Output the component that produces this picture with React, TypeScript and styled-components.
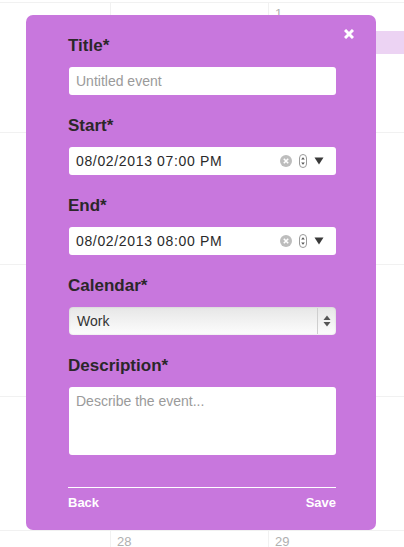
import React from "react";
import styled, { createGlobalStyle } from "styled-components";

const GlobalStyle = createGlobalStyle`
  html, body {
    margin: 0;
    padding: 0;
    background: #fff;
    font-family: "Liberation Sans", Arial, Helvetica, sans-serif;
  }
`;

const rows = [130, 132, 132, 134, 40];

const App: React.FC = () => {
  return (
    <>
      <GlobalStyle />
      <Page>
        <CalendarGrid>
          {rows.map((_, r) =>
            [0, 1, 2].map((c) => (
              <Cell key={`${r}-${c}`} $first={c === 0}>
                {r === 0 && c === 2 && (
                  <>
                    <DayNum>1</DayNum>
                    <EventBar />
                  </>
                )}
                {r === 4 && c === 1 && <DayNum>28</DayNum>}
                {r === 4 && c === 2 && <DayNum>29</DayNum>}
              </Cell>
            ))
          )}
        </CalendarGrid>

        <Popover>
          <CloseButton aria-label="Close">
            <svg width="10" height="10" viewBox="0 0 10 10">
              <path d="M1 1 L9 9 M9 1 L1 9" stroke="#fff" strokeWidth="3" />
            </svg>
          </CloseButton>

          <Field>
            <Label>Title*</Label>
            <TextInput placeholder="Untitled event" />
          </Field>

          <Field>
            <Label>Start*</Label>
            <DateTimeBox value="08/02/2013 07:00 PM" />
          </Field>

          <Field>
            <Label>End*</Label>
            <DateTimeBox value="08/02/2013 08:00 PM" />
          </Field>

          <Field>
            <Label>Calendar*</Label>
            <SelectBox>
              <SelectValue>Work</SelectValue>
              <SelectArrows>
                <svg width="8" height="12" viewBox="0 0 8 12">
                  <path d="M4 0.5 L7.5 5 L0.5 5 Z" fill="#555" />
                  <path d="M4 11.5 L7.5 7 L0.5 7 Z" fill="#555" />
                </svg>
              </SelectArrows>
            </SelectBox>
          </Field>

          <Field>
            <Label>Description*</Label>
            <TextArea placeholder="Describe the event..." />
          </Field>

          <Footer>
            <FooterLink>Back</FooterLink>
            <FooterLink>Save</FooterLink>
          </Footer>
        </Popover>
      </Page>
    </>
  );
};

const DateTimeBox: React.FC<{ value: string }> = ({ value }) => (
  <DateInput>
    <DateText>{value}</DateText>
    <DateIcons>
      <svg width="12" height="12" viewBox="0 0 12 12">
        <circle cx="6" cy="6" r="6" fill="#bdbdbd" />
        <path d="M3.8 3.8 L8.2 8.2 M8.2 3.8 L3.8 8.2" stroke="#fff" strokeWidth="1.6" />
      </svg>
      <svg width="8" height="14" viewBox="0 0 8 14">
        <rect x="0.5" y="0.5" width="7" height="13" rx="3.5" fill="#fff" stroke="#9a9a9a" />
        <path d="M4 3.2 L5.8 5.6 L2.2 5.6 Z" fill="#555" />
        <path d="M4 10.8 L5.8 8.4 L2.2 8.4 Z" fill="#555" />
      </svg>
      <svg width="10" height="8" viewBox="0 0 10 8">
        <path d="M0.5 0.5 L9.5 0.5 L5 7.5 Z" fill="#3a3a3a" />
      </svg>
    </DateIcons>
  </DateInput>
);

export default App;

const Page = styled.div`
  position: relative;
  width: 404px;
  height: 547px;
  overflow: hidden;
  background: #fff;
`;

const CalendarGrid = styled.div`
  display: grid;
  grid-template-columns: 110px 158px 1fr;
  grid-template-rows: ${rows.map((h) => `${h}px`).join(" ")};
  padding-top: 2px;
`;

const Cell = styled.div<{ $first: boolean }>`
  position: relative;
  border-top: 1px solid #f1f1f1;
  border-left: ${(p) => (p.$first ? "none" : "1px solid #f1f1f1")};
  padding: 4px 6px;
`;

const DayNum = styled.div`
  font-size: 13px;
  color: #b0b0b0;
  line-height: 14px;
`;

const EventBar = styled.div`
  margin: 10px -6px 0 -2px;
  height: 23px;
  background: #ecd3f3;
`;

const Popover = styled.div`
  position: absolute;
  left: 26px;
  top: 15px;
  width: 350px;
  height: 515px;
  box-sizing: border-box;
  padding: 21px 40px 0 42px;
  background: #c877dd;
  border-radius: 7px;
  display: flex;
  flex-direction: column;
  gap: 21px;
`;

const CloseButton = styled.div`
  position: absolute;
  top: 14px;
  right: 22px;
  width: 10px;
  height: 10px;
  display: flex;
  cursor: pointer;
`;

const Field = styled.div`
  display: flex;
  flex-direction: column;
  gap: 11px;
`;

const Label = styled.label`
  font-size: 17px;
  line-height: 20px;
  font-weight: bold;
  color: #2b2729;
`;

const inputBase = `
  box-sizing: border-box;
  width: 267px;
  margin-left: 1px;
  border: none;
  border-radius: 3px;
  background: #fff;
  font-family: "Liberation Sans", Arial, Helvetica, sans-serif;
  font-size: 14px;
  color: #333;
  outline: none;
`;

const TextInput = styled.input`
  ${inputBase}
  height: 28px;
  padding: 0 7px;
  &::placeholder {
    color: #9a9a9a;
  }
`;

const DateInput = styled.div`
  ${inputBase}
  height: 28px;
  padding: 0 12px 0 7px;
  display: flex;
  align-items: center;
  justify-content: space-between;
`;

const DateText = styled.span`
  letter-spacing: 0.65px;
  color: #2a2a2a;
`;

const DateIcons = styled.span`
  display: flex;
  align-items: center;
  gap: 7px;
`;

const SelectBox = styled.div`
  ${inputBase}
  height: 28px;
  display: flex;
  align-items: stretch;
  background: linear-gradient(#e6e6e6, #f4f4f4 60%, #fdfdfd);
  box-shadow: inset 0 0 2px rgba(0, 0, 0, 0.15);
  border-radius: 4px;
`;

const SelectValue = styled.div`
  flex: 1;
  display: flex;
  align-items: center;
  padding-left: 8px;
  color: #333;
`;

const SelectArrows = styled.div`
  width: 18px;
  display: flex;
  align-items: center;
  justify-content: center;
  border-left: 1px solid #cfcfcf;
  margin: 1px 0;
`;

const TextArea = styled.textarea`
  ${inputBase}
  height: 68px;
  padding: 6px 7px;
  resize: none;
  &::placeholder {
    color: #9a9a9a;
  }
`;

const Footer = styled.div`
  margin-top: 11px;
  border-top: 1px solid #fff;
  padding-top: 7px;
  display: flex;
  justify-content: space-between;
`;

const FooterLink = styled.span`
  font-size: 13px;
  line-height: 16px;
  font-weight: bold;
  color: #fff;
  cursor: pointer;
`;
